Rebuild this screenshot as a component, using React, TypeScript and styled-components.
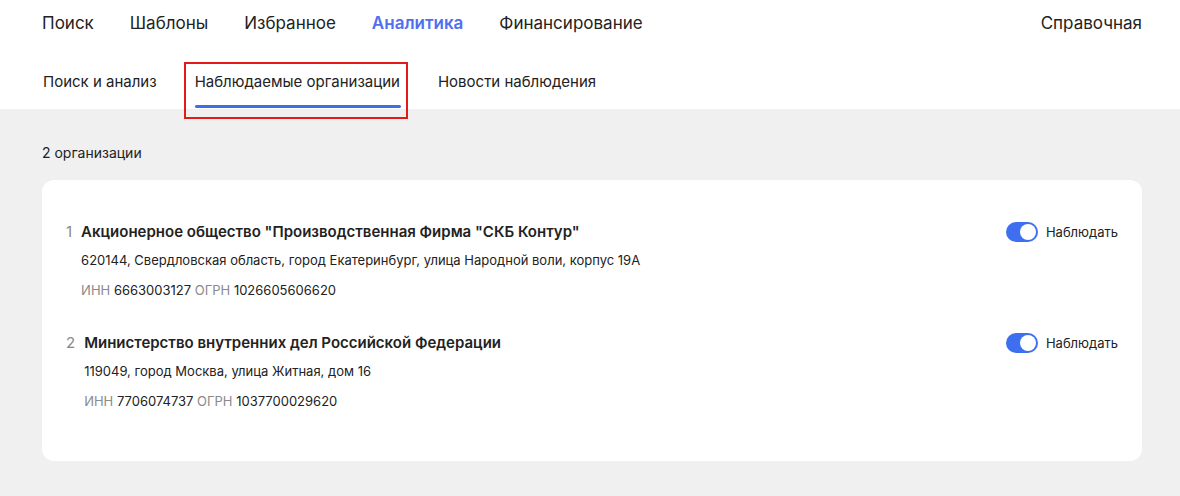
import React from "react";
import styled, { createGlobalStyle } from "styled-components";

const Global = createGlobalStyle`
  html, body { margin: 0; padding: 0; background: #f0f0f0; }
  body { font-family: Inter, "Noto Sans", Arial, sans-serif; color: #222; -webkit-font-smoothing: antialiased; }
  * { box-sizing: border-box; }
`;

const Header = styled.header`
  background: #fff;
  padding: 0 38px 0 42px;
`;

const TopNav = styled.nav`
  display: flex;
  align-items: center;
  height: 46px;
  gap: 36px;
`;

const TopLink = styled.a<{ $active?: boolean }>`
  font-size: 17px;
  color: ${(p) => (p.$active ? "#4f6ef2" : "#222")};
  font-weight: ${(p) => (p.$active ? 600 : 400)};
  text-decoration: none;
`;

const Spacer = styled.div`
  flex: 1;
`;

const SubNav = styled.nav`
  display: flex;
  align-items: stretch;
  height: 63px;
  gap: 38px;
  margin-left: 1px;
`;

const Tab = styled.a<{ $active?: boolean; $marked?: boolean }>`
  position: relative;
  display: flex;
  align-items: center;
  padding-top: 7px;
  font-size: 15px;
  color: #222;
  text-decoration: none;
  ${(p) =>
    p.$active &&
    `
    &::after {
      content: "";
      position: absolute;
      left: 0;
      right: -1px;
      bottom: 1px;
      height: 3px;
      border-radius: 2px;
      background: #3f6ee6;
    }
  `}
  ${(p) =>
    p.$marked &&
    `
    &::before {
      content: "";
      position: absolute;
      left: -11px;
      right: -8px;
      top: 16px;
      bottom: -10px;
      border: 2px solid #e21a1a;
      pointer-events: none;
      z-index: 2;
    }
  `}
`;

const Main = styled.main`
  padding: 35px 38px 40px 42px;
`;

const Count = styled.div`
  font-size: 14px;
  color: #222;
  margin-bottom: 19px;
`;

const Card = styled.section`
  background: #fff;
  border-radius: 12px;
  padding: 39px 23px 45px 24px;
  display: flex;
  flex-direction: column;
  gap: 25px;
`;

const Item = styled.div`
  display: flex;
  justify-content: space-between;
  align-items: flex-start;
`;

const Info = styled.div`
  display: grid;
  grid-template-columns: auto 1fr;
  column-gap: 9px;
`;

const Num = styled.span`
  font-size: 15px;
  color: #888;
  line-height: 26px;
`;

const Title = styled.div`
  font-size: 15px;
  font-weight: 600;
  line-height: 26px;
  color: #222;
`;

const Line = styled.div`
  grid-column: 2;
  font-size: 13px;
  line-height: 30px;
  color: #222;
`;

const Muted = styled.span`
  color: #8a8a8a;
`;

const Watch = styled.label`
  display: flex;
  align-items: center;
  gap: 8px;
  font-size: 13px;
  color: #222;
  margin-top: 3px;
  margin-right: 1px;
`;

const Toggle = styled.span`
  position: relative;
  width: 32px;
  height: 20px;
  border-radius: 10px;
  background: #3d6ff0;
  &::after {
    content: "";
    position: absolute;
    right: 2px;
    top: 2px;
    width: 16px;
    height: 16px;
    border-radius: 50%;
    background: #fff;
  }
`;

const orgs = [
  {
    n: 1,
    title: 'Акционерное общество "Производственная Фирма "СКБ Контур"',
    address: "620144, Свердловская область, город Екатеринбург, улица Народной воли, корпус 19А",
    inn: "6663003127",
    ogrn: "1026605606620",
  },
  {
    n: 2,
    title: "Министерство внутренних дел Российской Федерации",
    address: "119049, город Москва, улица Житная, дом 16",
    inn: "7706074737",
    ogrn: "1037700029620",
  },
];

export default function App() {
  return (
    <>
      <Global />
      <Header>
        <TopNav>
          <TopLink>Поиск</TopLink>
          <TopLink>Шаблоны</TopLink>
          <TopLink>Избранное</TopLink>
          <TopLink $active>Аналитика</TopLink>
          <TopLink>Финансирование</TopLink>
          <Spacer />
          <TopLink>Справочная</TopLink>
        </TopNav>
        <SubNav>
          <Tab>Поиск и анализ</Tab>
          <Tab $active $marked>Наблюдаемые организации</Tab>
          <Tab>Новости наблюдения</Tab>
        </SubNav>
      </Header>
      <Main>
        <Count>2 организации</Count>
        <Card>
          {orgs.map((o) => (
            <Item key={o.n}>
              <Info>
                <Num>{o.n}</Num>
                <Title>{o.title}</Title>
                <Line>{o.address}</Line>
                <Line>
                  <Muted>ИНН</Muted> {o.inn} <Muted>ОГРН</Muted> {o.ogrn}
                </Line>
              </Info>
              <Watch>
                <Toggle />
                Наблюдать
              </Watch>
            </Item>
          ))}
        </Card>
      </Main>
    </>
  );
}
